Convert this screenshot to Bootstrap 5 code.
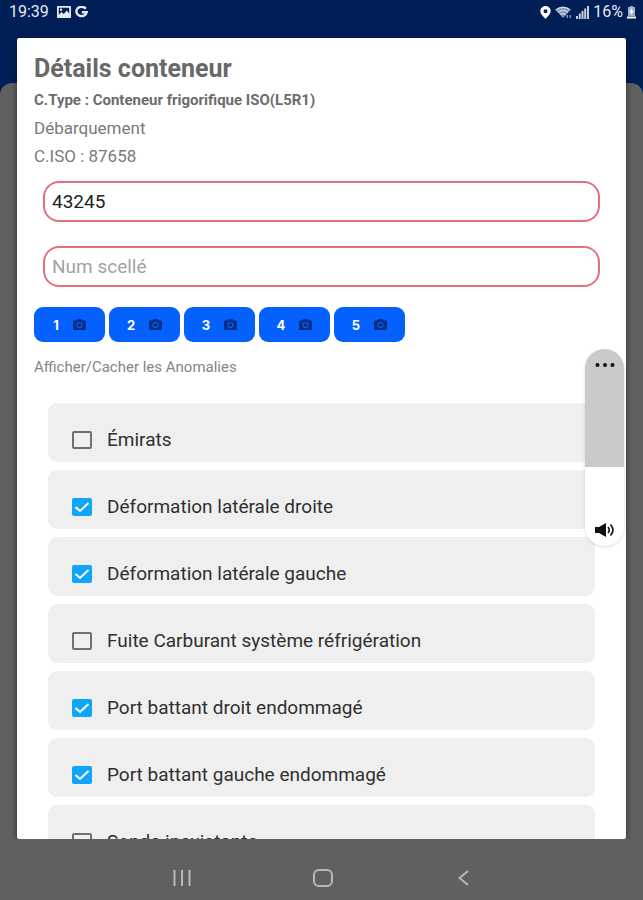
<!DOCTYPE html>
<html lang="fr">
<head>
<meta charset="utf-8">
<meta name="viewport" content="width=device-width, initial-scale=1">
<title>Détails conteneur</title>
<link href="https://cdn.jsdelivr.net/npm/bootstrap@5.3.0/dist/css/bootstrap.min.css" rel="stylesheet">
<style>
body { font-family: Roboto, "Liberation Sans", sans-serif; background: #606060; }
.screen { background: linear-gradient(#001f56 0 120px, #606060 120px); }
.status { height: 24px; padding: 0 7px 0 9px; color: #e4e9f3; font-size: 16px; line-height: 24px; }
.stage { grid-template: minmax(0, 1fr) / minmax(0, 1fr); }
.stage > * { grid-area: 1 / 1; }
.sheet { margin-top: 59px; background: #606060; border-radius: 12px 12px 0 0; }
.dialog { margin: 14px 17px 0; background: #fff; border-radius: 2px; box-shadow: 0 2px 6px rgba(0,0,0,.5); padding: 16px 17px 0; color: #7a7a7a; }
.dialog h1 { font-size: 25px; line-height: 30px; font-weight: 700; color: #686868; margin-bottom: 2px; }
.info { line-height: 28px; font-size: 17px; }
.info-type { font-size: 15px; font-weight: 700; color: #6c6c6c; }
.fields { padding: 11px 9px 0; gap: 24px; }
.fields .form-control { height: 41px; border: 2px solid #e66e82; border-radius: 16px; padding: 0 7px; font-size: 19px; color: #222; }
.fields .form-control::placeholder { color: #a2a2a2; }
.shots { gap: 4px; margin-top: 20px; }
.shots .btn { width: 71px; height: 35px; gap: 14px; background: #0561fd; color: #fff; border: 0; border-radius: 9px; font: 700 13px/20px Inter, sans-serif; }
.toggle { font-size: 15px; line-height: 20px; color: #858585; margin-top: 15px; }
.anomalies { gap: 8px; padding: 26px 14px 0; }
.anomaly { height: 59px; flex: none; background: #efefef; border-radius: 9px; padding: 15px 24px 0; gap: 15px; font-size: 19px; color: #303030; }
.anomaly .form-check-input { width: 20px; height: 18px; margin: 0; border: 2px solid #707070; border-radius: 2px; background-color: transparent; flex: none; }
.anomaly .form-check-input:checked { border: 0; background: #0ea5fb url("data:image/svg+xml,%3Csvg xmlns='http://www.w3.org/2000/svg' viewBox='0 0 20 18'%3E%3Cpath fill='none' stroke='%23fff' stroke-width='2' d='M3.500 9 8 13 16.500 5'/%3E%3C/svg%3E") center / 100% 100% no-repeat; }
.volume { top: 349px; right: 19px; width: 39px; height: 197px; border-radius: 20px; overflow: hidden; background: #fff; box-shadow: 0 1px 3px rgba(0,0,0,.15); }
.volume input { appearance: none; writing-mode: vertical-lr; width: 100%; height: 100%; margin: 0; background: linear-gradient(#cacaca 60%, #fff 60%); }
.volume input::-webkit-slider-thumb { appearance: none; width: 0; height: 0; }
.volume .btn { top: 6px; }
.volume .speaker { bottom: 6px; pointer-events: none; }
.keys { height: 61px; padding: 17px 147px 0 149px; }
.keys .btn { width: 66px; height: 44px; }
</style>
<script src="https://cdn.jsdelivr.net/npm/bootstrap@5.3.0/dist/js/bootstrap.bundle.min.js"></script>
</head>
<body>
<svg class="d-none" xmlns="http://www.w3.org/2000/svg">
  <symbol id="camera" viewBox="0 0 14 12"><path fill="#052f83" fill-rule="evenodd" d="M4.500 0h5l1 1.500H13q1 0 1 1V11q0 1-1 1H1q-1 0-1-1V2.500q0-1 1-1h2.500zM7 3.200a3.400 3.400 0 1 0 0 6.800 3.400 3.400 0 0 0 0-6.800zm0 1.200a2.200 2.200 0 1 1 0 4.400 2.200 2.200 0 0 1 0-4.400z"/></symbol>
</svg>
<div class="screen vh-100 d-flex flex-column position-relative overflow-hidden">
  <header class="status d-flex align-items-center justify-content-between">
    <div class="d-flex align-items-center gap-1">
      <span>19:39</span>
      <svg class="ms-1" width="14" height="12" viewBox="0 0 14 12" aria-hidden="true"><path fill="#e4e9f3" fill-rule="evenodd" d="M1 0h12q1 0 1 1v10q0 1-1 1H1q-1 0-1-1V1q0-1 1-1zm.8 1.800v7L4.500 6l2.300 2 3-3.600 2.400 3V1.800zM4 2.500a1.200 1.200 0 1 1 0 2.400 1.200 1.200 0 0 1 0-2.400z"/></svg>
      <svg width="13" height="12" viewBox="0 0 13 12" aria-hidden="true"><path fill="none" stroke="#e4e9f3" stroke-width="2.400" d="M10.800 2.700A5.200 4.700 0 1 0 11.700 6.200H6.800"/></svg>
    </div>
    <div class="d-flex align-items-center gap-1">
      <svg width="11" height="13" viewBox="0 0 11 13" aria-hidden="true"><path fill="#fff" fill-rule="evenodd" d="M5.500 0A5.200 5 0 0 1 10.700 5c0 3-3.200 5.500-5.200 8C3.500 10.500.300 8 .300 5A5.200 5 0 0 1 5.500 0zm0 3.200a2 2 0 1 0 0 4 2 2 0 0 0 0-4z"/></svg>
      <svg width="17" height="13" viewBox="0 0 17 13" aria-hidden="true"><path fill="#7f90b2" d="M.5 4Q8 -2 15.500 4L8 12z"/><g fill="none" stroke="#d0d9e8" stroke-width="1.300"><path d="M.700 4Q8 -1.500 15.300 4M3 6.300Q8 2.500 13 6.300M5.300 8.600Q8 6.500 10.700 8.600"/></g><path fill="#8797b8" d="M11.500 9h1.500v3h-1.500zM14.500 9H16v3h-1.500z"/></svg>
      <svg width="13" height="13" viewBox="0 0 13 13" aria-hidden="true"><path fill="#c4cede" d="M0 10h2v3H0zM2.800 7.500h2V13h-2zM5.500 5h2v8h-2zM8.200 2.500h2V13h-2zM11 0h2v13h-2z"/></svg>
      <span>16%</span>
      <svg width="9" height="13" viewBox="0 0 9 13" aria-hidden="true"><path fill="#9fadc8" d="M3 0h3v1h2v9H1V1h2z"/><path fill="#fff" d="M0 10.500h9V12.500H0zM5 2 2 6.500h2V9l3-4.300H5z"/></svg>
    </div>
  </header>

  <main class="stage d-grid flex-grow-1 overflow-hidden">
    <div class="sheet"></div>
    <section class="dialog overflow-hidden" aria-labelledby="title">
      <h1 id="title">Détails conteneur</h1>
      <div class="info info-type">C.Type : Conteneur frigorifique ISO(L5R1)</div>
      <div class="info">Débarquement</div>
      <div class="info">C.ISO : 87658</div>
      <div class="fields d-flex flex-column">
        <input class="form-control" type="text" value="43245" aria-label="Numéro conteneur">
        <input class="form-control" type="text" placeholder="Num scellé" aria-label="Num scellé">
      </div>
      <div class="shots d-flex">
        <button class="btn p-0 d-flex align-items-center justify-content-center" type="button">1<svg width="13" height="11" aria-hidden="true"><use href="#camera"/></svg></button>
        <button class="btn p-0 d-flex align-items-center justify-content-center" type="button">2<svg width="13" height="11" aria-hidden="true"><use href="#camera"/></svg></button>
        <button class="btn p-0 d-flex align-items-center justify-content-center" type="button">3<svg width="13" height="11" aria-hidden="true"><use href="#camera"/></svg></button>
        <button class="btn p-0 d-flex align-items-center justify-content-center" type="button">4<svg width="13" height="11" aria-hidden="true"><use href="#camera"/></svg></button>
        <button class="btn p-0 d-flex align-items-center justify-content-center" type="button">5<svg width="13" height="11" aria-hidden="true"><use href="#camera"/></svg></button>
      </div>
      <button class="toggle btn p-0 border-0 d-block" type="button">Afficher/Cacher les Anomalies</button>
      <div class="anomalies d-flex flex-column">
        <label class="anomaly d-flex align-items-center"><input class="form-check-input" type="checkbox">Émirats</label>
        <label class="anomaly d-flex align-items-center"><input class="form-check-input" type="checkbox" checked>Déformation latérale droite</label>
        <label class="anomaly d-flex align-items-center"><input class="form-check-input" type="checkbox" checked>Déformation latérale gauche</label>
        <label class="anomaly d-flex align-items-center"><input class="form-check-input" type="checkbox">Fuite Carburant système réfrigération</label>
        <label class="anomaly d-flex align-items-center"><input class="form-check-input" type="checkbox" checked>Port battant droit endommagé</label>
        <label class="anomaly d-flex align-items-center"><input class="form-check-input" type="checkbox" checked>Port battant gauche endommagé</label>
        <label class="anomaly d-flex align-items-center"><input class="form-check-input" type="checkbox">Sonde inexistante</label>
      </div>
    </section>
  </main>

  <nav class="keys d-flex justify-content-between align-items-start" aria-label="Navigation">
    <button class="btn p-0 border-0 d-flex justify-content-center align-items-center" type="button" aria-label="Récents"><svg width="18" height="16" viewBox="0 0 18 16"><path stroke="#b8b8b8" stroke-width="2" d="M1.500 0v16M9 0v16M16.500 0v16"/></svg></button>
    <button class="btn p-0 border-0 d-flex justify-content-center align-items-center" type="button" aria-label="Accueil"><svg width="20" height="18" viewBox="0 0 20 18"><rect x="1" y="1" width="18" height="16" rx="5" fill="none" stroke="#b8b8b8" stroke-width="2"/></svg></button>
    <button class="btn p-0 border-0 d-flex justify-content-center align-items-center" type="button" aria-label="Retour"><svg width="11" height="16" viewBox="0 0 11 16"><path fill="none" stroke="#b8b8b8" stroke-width="2" d="M10 1 1.500 8 10 15"/></svg></button>
  </nav>

  <div class="volume position-absolute">
    <input type="range" value="40" aria-label="Volume">
    <button class="btn border-0 p-0 position-absolute start-0 w-100 d-flex justify-content-center" type="button" aria-label="Plus d'options"><svg width="20" height="20" viewBox="0 0 20 20"><g fill="#111"><circle cx="2.500" cy="10" r="2"/><circle cx="10" cy="10" r="2"/><circle cx="17.500" cy="10" r="2"/></g></svg></button>
    <span class="speaker position-absolute start-0 w-100 d-flex justify-content-center"><svg width="20" height="20" viewBox="0 0 20 20"><path fill="#111" d="M0 7h4l7-4v14l-7-4H0z"/><path fill="none" stroke="#111" stroke-width="1.600" d="M13 7q2.500 3 0 6M15.500 4.500q5 5.500 0 11"/></svg></span>
  </div>
</div>
</body>
</html>
